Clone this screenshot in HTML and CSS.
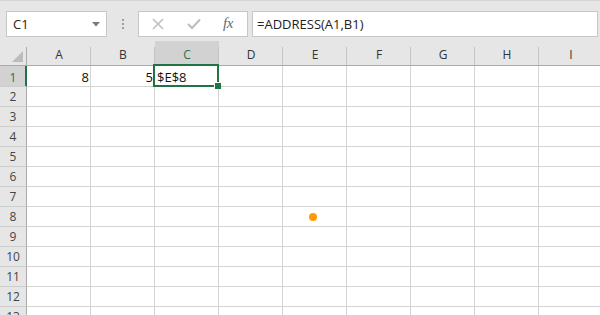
FILE: index.html
```html
<!DOCTYPE html>
<html>
<head>
<meta charset="utf-8">
<link rel="stylesheet" href="styles.css">
</head>
<body>
<div class="app">
  <div class="toolbar">
    <div class="namebox">
      <span class="name">C1</span>
      <svg class="caret" width="8" height="5" viewBox="0 0 8 5"><path d="M0 0H8L4 4.5Z" fill="#7a7a7a"/></svg>
    </div>
    <div class="grip"><i></i><i></i><i></i></div>
    <div class="fbtns">
      <svg class="btn" width="12" height="12" viewBox="0 0 12 12"><path d="M1 1L11 11M11 1L1 11" stroke="#bdbdbd" stroke-width="1.5" fill="none"/></svg>
      <svg class="btn" width="14" height="12" viewBox="0 0 14 12"><path d="M1 6L5 10L13 1.5" stroke="#bdbdbd" stroke-width="2" fill="none"/></svg>
      <span class="fx">fx</span>
    </div>
    <div class="formula">=ADDRESS(A1,B1)</div>
  </div>
  <div class="sheet">
    <div class="corner"><span class="tri"></span></div>
    <div class="ch">A</div><div class="ch">B</div><div class="ch sel">C</div><div class="ch">D</div><div class="ch">E</div><div class="ch">F</div><div class="ch">G</div><div class="ch">H</div><div class="ch">I</div>

    <div class="rh sel r1">1</div>
    <div class="c r1 num">8</div><div class="c r1 num">5</div><div class="c r1 active">$E$8</div><div class="c r1"></div><div class="c r1"></div><div class="c r1"></div><div class="c r1"></div><div class="c r1"></div><div class="c r1"></div>

    <div class="rh">2</div><div class="c"></div><div class="c"></div><div class="c"></div><div class="c"></div><div class="c"></div><div class="c"></div><div class="c"></div><div class="c"></div><div class="c"></div>
    <div class="rh">3</div><div class="c"></div><div class="c"></div><div class="c"></div><div class="c"></div><div class="c"></div><div class="c"></div><div class="c"></div><div class="c"></div><div class="c"></div>
    <div class="rh">4</div><div class="c"></div><div class="c"></div><div class="c"></div><div class="c"></div><div class="c"></div><div class="c"></div><div class="c"></div><div class="c"></div><div class="c"></div>
    <div class="rh">5</div><div class="c"></div><div class="c"></div><div class="c"></div><div class="c"></div><div class="c"></div><div class="c"></div><div class="c"></div><div class="c"></div><div class="c"></div>
    <div class="rh">6</div><div class="c"></div><div class="c"></div><div class="c"></div><div class="c"></div><div class="c"></div><div class="c"></div><div class="c"></div><div class="c"></div><div class="c"></div>
    <div class="rh">7</div><div class="c"></div><div class="c"></div><div class="c"></div><div class="c"></div><div class="c"></div><div class="c"></div><div class="c"></div><div class="c"></div><div class="c"></div>
    <div class="rh">8</div><div class="c"></div><div class="c"></div><div class="c"></div><div class="c"></div><div class="c dotcell"><span class="dot"></span></div><div class="c"></div><div class="c"></div><div class="c"></div><div class="c"></div>
    <div class="rh">9</div><div class="c"></div><div class="c"></div><div class="c"></div><div class="c"></div><div class="c"></div><div class="c"></div><div class="c"></div><div class="c"></div><div class="c"></div>
    <div class="rh">10</div><div class="c"></div><div class="c"></div><div class="c"></div><div class="c"></div><div class="c"></div><div class="c"></div><div class="c"></div><div class="c"></div><div class="c"></div>
    <div class="rh">11</div><div class="c"></div><div class="c"></div><div class="c"></div><div class="c"></div><div class="c"></div><div class="c"></div><div class="c"></div><div class="c"></div><div class="c"></div>
    <div class="rh">12</div><div class="c"></div><div class="c"></div><div class="c"></div><div class="c"></div><div class="c"></div><div class="c"></div><div class="c"></div><div class="c"></div><div class="c"></div>
    <div class="rh">13</div><div class="c"></div><div class="c"></div><div class="c"></div><div class="c"></div><div class="c"></div><div class="c"></div><div class="c"></div><div class="c"></div><div class="c"></div>
  </div>
</div>
</body>
</html>
```
FILE: styles.css
```css
* { box-sizing: border-box; }
html, body { margin: 0; padding: 0; }
body {
  width: 600px;
  height: 315px;
  overflow: hidden;
  background: #e6e6e6;
  font-family: "Open Sans", "Noto Sans", sans-serif;
}
.app { width: 600px; height: 315px; overflow: hidden; }

.toolbar {
  height: 41px;
  display: flex;
  align-items: flex-start;
  padding: 10px 2px 0 6px;
  border-top: 1px solid #d4d4d4;
  background: #e6e6e6;
}
.namebox {
  width: 101px;
  height: 26px;
  background: #fff;
  border: 1px solid #c6c6c6;
  display: flex;
  align-items: center;
  justify-content: space-between;
  padding: 0 6px 0 6px;
}
.name { font-size: 13px; color: #222; }
.caret { margin-top: 1px; }
.grip {
  width: 31px;
  height: 26px;
  display: flex;
  flex-direction: column;
  align-items: center;
  justify-content: center;
  gap: 2px;
}
.grip i { display: block; width: 2px; height: 2px; background: #a0a0a0; }
.fbtns {
  width: 110px;
  height: 26px;
  background: #fff;
  border: 1px solid #c6c6c6;
  display: flex;
  align-items: center;
  padding: 0 0 0 13px;
}
.fbtns .btn:first-child { margin-right: 23px; }
.fbtns .btn:nth-child(2) { margin-right: 22px; }
.fx {
  font-family: "Liberation Serif", "DejaVu Serif", serif;
  font-style: italic;
  font-size: 15px;
  color: #6a6a6a;
  letter-spacing: -0.5px;
  margin-top: -2px;
}
.formula {
  flex: 1;
  height: 26px;
  margin-left: 4px;
  background: #fff;
  border: 1px solid #c6c6c6;
  font-size: 13px;
  color: #222;
  padding: 3px 0 0 4px;
  line-height: 18px;
}

.sheet {
  display: grid;
  grid-template-columns: 27px repeat(9, 64px);
  grid-template-rows: 25px 21px repeat(12, 20px);
  background: #fff;
}
.corner, .ch {
  background: #e6e6e6;
  border-bottom: 1px solid #ababab;
  position: relative;
}
.corner::after, .ch::after {
  content: "";
  position: absolute;
  right: 0;
  top: 6px;
  bottom: 0;
  width: 1px;
  background: #c4c4c4;
}
.corner::after { background: #ababab; }
.tri {
  position: absolute;
  right: 4px;
  bottom: 3px;
  width: 0;
  height: 0;
  border-left: 11px solid transparent;
  border-bottom: 11px solid #bcbcbc;
}
.ch {
  display: flex;
  align-items: flex-end;
  justify-content: center;
  font-size: 12px;
  color: #333;
  padding-bottom: 2px;
  line-height: 16px;
}
.ch.sel {
  background: #d2d2d2;
  color: #217346;
  border-bottom-color: #217346;
  box-shadow: inset 0 -1px 0 #217346;
}
.rh {
  background: #e6e6e6;
  border-right: 1px solid #ababab;
  border-bottom: 1px solid #cdcdcd;
  display: flex;
  align-items: center;
  justify-content: center;
  font-size: 12px;
  color: #444;
  line-height: 16px;
  padding-top: 1px;
}
.rh.sel {
  background: #d2d2d2;
  color: #217346;
  border-right-color: #217346;
  box-shadow: inset -1px 0 0 #217346;
  padding-top: 3px;
}
.c {
  border-right: 1px solid #d4d4d4;
  border-bottom: 1px solid #d4d4d4;
  font-size: 13px;
  color: #111;
  line-height: 18px;
  padding: 2px 2px 0 3px;
  white-space: nowrap;
}
.c.num { text-align: right; padding-right: 1px; }
.active { position: relative; padding-left: 2px; }
.active::before {
  content: "";
  position: absolute;
  left: -2px;
  top: -2px;
  right: -1px;
  bottom: -1px;
  border: 2px solid #217346;
}
.active::after {
  content: "";
  position: absolute;
  right: -3px;
  bottom: -3px;
  width: 6px;
  height: 6px;
  background: #217346;
  border-left: 1px solid #fff;
  border-top: 1px solid #fff;
}
.dotcell { position: relative; }
.dot {
  position: absolute;
  left: 26px;
  top: 6px;
  width: 8px;
  height: 8px;
  border-radius: 50%;
  background: #ff9c00;
}
```
